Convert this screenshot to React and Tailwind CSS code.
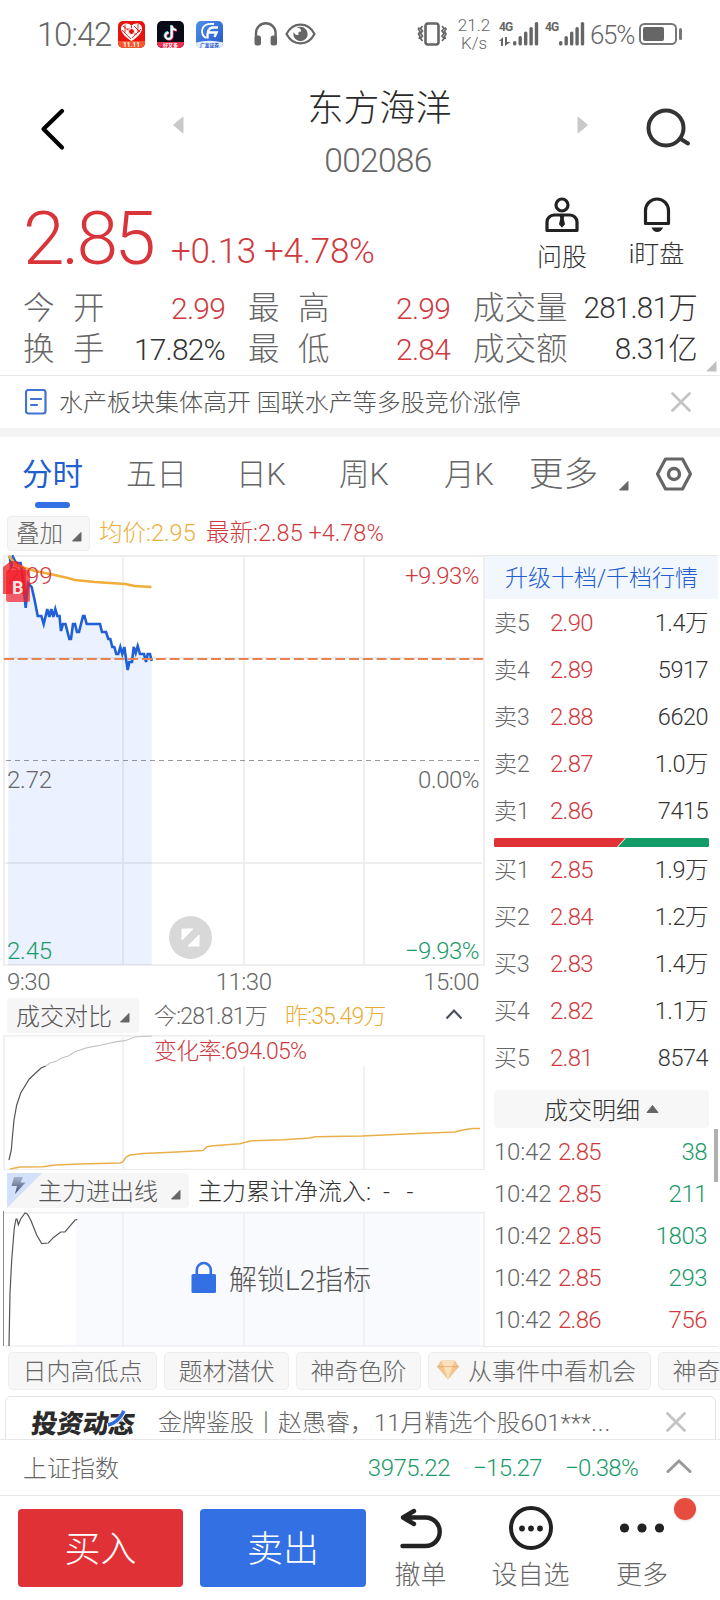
import React from 'react';

const stats = [
  ['今', '开', '2.99', 'text-[#cf3a3f]'],
  ['换', '手', '17.82%', 'text-[#333]'],
];
const stats2 = [
  ['最', '高', '2.99'],
  ['最', '低', '2.84'],
];
const stats3 = [
  ['成交量', '281.81万'],
  ['成交额', '8.31亿'],
];

const asks = [
  ['卖5', '2.90', '1.4万'],
  ['卖4', '2.89', '5917'],
  ['卖3', '2.88', '6620'],
  ['卖2', '2.87', '1.0万'],
  ['卖1', '2.86', '7415'],
];

const bids = [
  ['买1', '2.85', '1.9万'],
  ['买2', '2.84', '1.2万'],
  ['买3', '2.83', '1.4万'],
  ['买4', '2.82', '1.1万'],
  ['买5', '2.81', '8574'],
];

const trades = [
  ['10:42', '2.85', '38', 'text-[#1a9a68]'],
  ['10:42', '2.85', '211', 'text-[#1a9a68]'],
  ['10:42', '2.85', '1803', 'text-[#1a9a68]'],
  ['10:42', '2.85', '293', 'text-[#1a9a68]'],
  ['10:42', '2.86', '756', 'text-[#cf3a3f]'],
];

const PRICE =
  '8.5,557 10,557 11,568 13,557 16,563 20.6,563 23,580 25.7,608 28,583 31.7,587 35,602 37.7,616 41.3,616 43.7,624 47.3,609 49.3,617 51.3,609 53.3,617 55.3,609 57.3,616 59.5,616 61,631 63,624 65.5,624 69.3,639 71,639 73,624 75,624 77,632 79,632 83,616 84.5,616 86.7,624 100,624 102,632 106,632 108.3,639 110.3,639 112.3,647 114.3,647 116.3,654 118.3,654 120.3,647 122.3,654 124.3,647 127.7,670 129.3,662 132,662 133.7,647 135.7,653 137.7,646 140,654 144,654 146,662 147.7,654 150,654 151.7,661';

function Corner({ className }) {
  return (
    <svg className={className} width="10" height="10" viewBox="0 0 10 10">
      <path d="M9 0.5V9H0.5Z" fill="#666" stroke="#666" strokeLinejoin="round" />
    </svg>
  );
}

function Close() {
  return (
    <svg width="20" height="20" viewBox="0 0 20 20" stroke="#c4c4c4" strokeWidth="2.8" strokeLinecap="round">
      <path d="M1.5 1.5L18.5 18.5M18.5 1.5L1.5 18.5" />
    </svg>
  );
}

function Bars() {
  return (
    <svg width="26" height="24" viewBox="0 0 26 24" fill="#666">
      <rect x="0" y="19" width="3.4" height="4.6" rx="1.6" />
      <rect x="5.5" y="14" width="3.4" height="9.6" rx="1.6" />
      <rect x="11" y="9.5" width="3.4" height="14.1" rx="1.6" />
      <rect x="16.4" y="5" width="3.4" height="18.6" rx="1.6" />
      <rect x="21.8" y="0" width="3.4" height="23.6" rx="1.6" />
    </svg>
  );
}

function StatusBar() {
  return (
    <div className="flex h-[68px] items-center pl-[37px] text-[#666]">
      <span className="w-[81px] pt-[2px] text-[33px] tracking-[-1.2px]">10:42</span>
      <svg width="27" height="27" viewBox="0 0 27 27">
        <rect width="27" height="27" rx="5" fill="#e8120f" />
        <path d="M0 20H27V22a5 5 0 0 1-5 5H5a5 5 0 0 1-5-5Z" fill="#f4572c" />
        <path d="M13.5 20C8 16.500 3 12 3 7.500C3 2 10.500 1 13.500 5C16.500 1 24 2 24 7.500C24 12 19 16.500 13.500 20Z" fill="#fff" />
        <path d="M5 5l6 5M7 3.500v8M20 3v9M16 5l6 6M4 9l9 9M23 8l-9 9M13.500 5v4M9 8h3M16 13h3" stroke="#e8120f" strokeWidth="0.9" />
        <circle cx="13.500" cy="10.500" r="3" fill="#e8120f" stroke="#fff" />
        <text x="13.500" y="26" fontSize="6.500" textAnchor="middle" fill="#fff" className="font-bold">11.11</text>
      </svg>
      <svg className="ml-3" width="27" height="27" viewBox="0 0 27 27">
        <rect width="27" height="27" rx="5" fill="#0b0a17" />
        <path d="M0 21H27V22a5 5 0 0 1-5 5H5a5 5 0 0 1-5-5Z" fill="#e8304f" />
        <path d="M14.200 4v10.500a3.200 3.200 0 1 1-3.200-3.200M14.200 4.500c.5 2.500 2.300 4 4.500 4.200" fill="none" stroke="#2bdcd8" strokeWidth="2.400" />
        <path d="M15.400 5v10.300a3.200 3.200 0 1 1-3.200-3.200M15.400 5.300c.5 2.500 2.300 4 4.500 4.200" fill="none" stroke="#f4305a" strokeWidth="2.400" />
        <path d="M14.800 4.500v10.400a3.200 3.200 0 1 1-3.200-3.200M14.800 4.900c.5 2.500 2.300 4 4.500 4.200" fill="none" stroke="#fff" strokeWidth="2" />
        <text x="13.500" y="26" fontSize="5" textAnchor="middle" fill="#fff" className="font-bold">好又多</text>
      </svg>
      <svg className="ml-3" width="27" height="27" viewBox="0 0 27 27">
        <defs>
          <linearGradient id="gf" x1="0" y1="0" x2="1" y2="1">
            <stop offset="0" stopColor="#4f8eea" />
            <stop offset="1" stopColor="#2457c9" />
          </linearGradient>
        </defs>
        <rect width="27" height="27" rx="5" fill="url(#gf)" />
        <path d="M0 21.500Q13.500 18 27 21.500V22a5 5 0 0 1-5 5H5a5 5 0 0 1-5-5Z" fill="#e6effd" />
        <path d="M10 17A7.600 7.600 0 0 1 9.500 4Q13 2.300 18 3" fill="none" stroke="#fff" strokeWidth="1.800" />
        <path d="M11.500 17.500Q11 7.500 16 6.500H22M13 11.500H20.500L18.500 16" fill="none" stroke="#fff" strokeWidth="2.400" />
        <text x="13.500" y="26" fontSize="4.800" textAnchor="middle" fill="#2457c9" className="font-bold">广发证券</text>
      </svg>
      <svg className="ml-[31px]" width="24" height="24" viewBox="0 0 24 24">
        <path d="M2 16V11a9.800 9.800 0 0 1 19.600 0V16" fill="none" stroke="#666" strokeWidth="2.400" />
        <rect x="0.500" y="13.500" width="6.500" height="10" rx="2.500" fill="#666" />
        <rect x="16.600" y="13.500" width="6.500" height="10" rx="2.500" fill="#666" />
      </svg>
      <svg className="ml-[7px]" width="31" height="22" viewBox="0 0 31 22">
        <path d="M1.500 11C8 -1.500 23 -1.500 29.500 11C23 23.500 8 23.500 1.500 11Z" fill="none" stroke="#666" strokeWidth="2.200" />
        <circle cx="15.500" cy="11" r="7.200" fill="#666" />
        <circle cx="12.500" cy="8.300" r="3.600" fill="#fff" />
        <circle cx="15.300" cy="10.500" r="2" fill="#666" />
      </svg>
      <svg className="ml-[101px]" width="32" height="24" viewBox="0 0 32 24" fill="none" stroke="#666">
        <rect x="8.500" y="1.500" width="13" height="21" rx="2.500" strokeWidth="2.600" />
        <path d="M5.500 4l-2 2.500 2 2.500-2 2.500 2 2.500-2 2.500 2 2.500M2.500 5.500l-1 1.500 1.500 2.500-1.500 2.500 1.500 2.500-1 2.500M25 4l2 2.500-2 2.500 2 2.500-2 2.500 2 2.500-2 2.500M28 5.500l1 1.500-1.500 2.500 1.500 2.500-1.500 2.500 1 2.500" strokeWidth="1.700" />
      </svg>
      <div className="ml-[7px] w-[36px] text-center text-[17px] leading-[18.500px]">21.2<br />K/s</div>
      <div className="ml-[7px] flex items-end">
        <div className="flex h-6 w-[14px] flex-col justify-between">
          <span className="text-[12px] leading-[11px] font-bold tracking-[-0.8px]">4G</span>
          <svg width="12" height="9" viewBox="0 0 12 9" fill="#666">
            <path d="M0 4L4 0V9H2V4ZM6 0h2v5h3.500L6 9Z" />
          </svg>
        </div>
        <Bars />
      </div>
      <div className="ml-[6px] flex items-end">
        <div className="flex h-6 w-[14px]">
          <span className="text-[12px] leading-[11px] font-bold tracking-[-0.8px]">4G</span>
        </div>
        <Bars />
      </div>
      <span className="ml-[5px] w-[49px] pt-[2px] text-[26px] tracking-[-1.3px]">65%</span>
      <svg width="44" height="22" viewBox="0 0 44 22">
        <rect x="1" y="1" width="36" height="20" rx="4.500" fill="none" stroke="#777" strokeWidth="2" />
        <rect x="4" y="4" width="21" height="14" rx="2" fill="#666" />
        <rect x="40" y="5" width="3" height="12" rx="1.500" fill="#777" />
      </svg>
    </div>
  );
}

function Header() {
  return (
    <div className="flex h-[117px] items-start">
      <svg className="mt-10 ml-10" width="26" height="43" viewBox="0 0 26 43">
        <path d="M22 3L3.500 21L22 39.500" fill="none" stroke="#000" strokeWidth="4.200" strokeLinecap="round" strokeLinejoin="round" />
      </svg>
      <svg className="mt-12 ml-[106px]" width="12" height="18" viewBox="0 0 12 18">
        <path d="M11 1V17L1.500 9Z" fill="#c9c9c9" stroke="#c9c9c9" strokeLinejoin="round" />
      </svg>
      <div className="w-[393px] pt-[19px] pr-[2px] text-center">
        <div className="text-[36px] leading-[44px] text-[#2a2a2a]">东方海洋</div>
        <div className="mt-[12px] pr-[3px] text-[33.500px] leading-9 tracking-[-0.700px] text-[#666]">002086</div>
      </div>
      <svg className="mt-12" width="12" height="18" viewBox="0 0 12 18">
        <path d="M1 1V17L10.500 9Z" fill="#c9c9c9" stroke="#c9c9c9" strokeLinejoin="round" />
      </svg>
      <svg className="mt-[39px] ml-[57px]" width="46" height="42" viewBox="0 0 46 42" fill="none" stroke="#333" strokeWidth="4">
        <circle cx="20" cy="21" r="17.500" />
        <path d="M34 31.500L42 36.500" strokeLinecap="round" />
      </svg>
    </div>
  );
}

function PriceRow() {
  return (
    <div className="flex h-[98px] text-[#d8343a]">
      <div className="flex w-[146px] pl-[23px] text-[75px] leading-[107px] font-[350]">
        <span className="tracking-[-3px]">2.</span>
        <span className="tracking-[-4px]">85</span>
      </div>
      <div className="w-[368px] pt-[49px] pl-[25px] text-[35px] leading-9 tracking-[-0.300px] whitespace-nowrap text-[#cf3a3f]">+0.13 +4.78%</div>
      <div className="flex w-[96px] flex-col items-center pt-3 text-[#333]">
        <svg width="34" height="36" viewBox="0 0 34 36" fill="none" stroke="#222" strokeWidth="3.200">
          <circle cx="17" cy="8" r="6" />
          <path d="M2 33.500V25a7 7 0 0 1 7-7H25a7 7 0 0 1 7 7V33.500Z" strokeLinejoin="round" />
          <path d="M15.500 18h3l-.5 4 1.200 5-2.200 2.500-2.200-2.500 1.200-5Z" fill="#222" strokeWidth="1.500" />
        </svg>
        <div className="mt-[9px] text-[25px] leading-8">问股</div>
      </div>
      <div className="flex w-[93px] flex-col items-center pt-3 text-[#333]">
        <svg width="28" height="36" viewBox="0 0 28 36">
          <path d="M2.500 26.500V13.500a11.500 11.500 0 0 1 23 0V26.500Z" fill="none" stroke="#222" strokeWidth="3.200" strokeLinejoin="round" />
          <path d="M8.500 30.500H20Q18 35 14.200 35Q10.500 35 8.500 30.500Z" fill="#222" />
        </svg>
        <div className="mt-[6px] text-[25px] leading-8">i盯盘</div>
      </div>
    </div>
  );
}

function Stats() {
  return (
    <div className="flex h-[93px] border-b border-[#e8e8e8] pt-[5px] pl-[23px] text-[31.500px] leading-[41px] text-[#666]">
      <div className="w-[203px]">
        {stats.map(([a, b, v, color]) => (
          <div key={a} className="flex">
            <span className="w-[50px]">{a}</span>
            <span>{b}</span>
            <span className={`mr-[1px] ml-auto text-[30px] tracking-[-0.800px] ${color}`}>{v}</span>
          </div>
        ))}
      </div>
      <div className="ml-[22px] w-[203px]">
        {stats2.map(([a, b, v]) => (
          <div key={b} className="flex">
            <span className="w-[50px]">{a}</span>
            <span>{b}</span>
            <span className="mr-[1px] ml-auto text-[30px] tracking-[-0.800px] text-[#cf3a3f]">{v}</span>
          </div>
        ))}
      </div>
      <div className="ml-[22px] w-[224px]">
        {stats3.map(([a, v]) => (
          <div key={a} className="flex">
            <span>{a}</span>
            <span className="ml-auto text-[29.500px] tracking-[-0.700px] whitespace-nowrap text-[#333]">{v}</span>
          </div>
        ))}
      </div>
      <svg className="mt-[73px] ml-[9px]" width="11" height="11" viewBox="0 0 11 11">
        <path d="M10.500 0V10.500H0Z" fill="#bfbfbf" />
      </svg>
    </div>
  );
}

function NewsBar() {
  return (
    <div className="flex h-[61px] items-center border-b-[9px] border-[#f4f4f4] pr-[29px] pl-[25px]">
      <svg width="22" height="26" viewBox="0 0 22 26" fill="none" stroke="#3f74d1" strokeWidth="2.200">
        <rect x="1" y="1" width="19.500" height="23.500" rx="2.500" />
        <path d="M6 10H16M6 16H12" strokeLinecap="round" />
      </svg>
      <span className="mr-auto ml-[12px] pt-[2px] text-[24px] text-[#555]">水产板块集体高开 国联水产等多股竞价涨停</span>
      <Close />
    </div>
  );
}

function Tabs() {
  return (
    <div className="flex h-[75px] pl-[22px] text-[30.500px] leading-[75px] text-[#666]">
      <div className="w-[104px] font-[380] text-[#1f5fd0]">
        <div className="h-[65px]">分时</div>
        <div className="ml-[13px] h-[6px] w-[35px] rounded-full bg-[#3270e4]" />
      </div>
      <div className="w-[110px]">五日</div>
      <div className="w-[103px]">日K</div>
      <div className="w-[105px]">周K</div>
      <div className="w-[85px]">月K</div>
      <div className="w-[69px] text-[34.500px]">更多</div>
      <Corner className="mt-[44px] ml-[21px]" />
      <svg className="mt-[20px] ml-[26px]" width="38" height="34" viewBox="0 0 38 34" fill="none" stroke="#666">
        <path d="M10.500 2H27.500L35.500 17L27.500 32H10.500L2.500 17Z" strokeWidth="3.200" strokeLinejoin="round" />
        <circle cx="19" cy="17" r="5.500" strokeWidth="3.400" />
      </svg>
    </div>
  );
}

function PriceChart() {
  return (
    <svg className="block" width="485" height="411" viewBox="0 555 485 411">
      <g stroke="#eeeeee" strokeWidth="1.800">
        <path d="M4 556H485M4 965H485M4 556V966M123 556V965M244 556V965M364 556V965M484 556V965M4 658H482M4 863H482" fill="none" />
      </g>
      <path d="M6 760.500H482" stroke="#999" strokeWidth="1" strokeDasharray="5 4" />
      <polygon points={`8,965 ${PRICE} 151.700,965`} fill="#3b78ff" fillOpacity="0.100" />
      <polyline points={PRICE} fill="none" stroke="#1f5fd8" strokeWidth="2.600" />
      <path d="M9 556L16 565L25 568L35 571L50 574L68 578L75 580L95 582L125 584L135 586L151.500 587" fill="none" stroke="#f0ae38" strokeWidth="2.600" />
      <path d="M4 659H484" stroke="#e8834f" strokeWidth="2" strokeDasharray="10 3.800" />
      <g fontSize="24" letterSpacing="-0.500">
        <text x="7" y="584" fill="#cf3a3f" letterSpacing="0">2.99</text>
        <text x="479" y="584" textAnchor="end" fill="#cf3a3f">+9.93%</text>
        <text x="7" y="788" fill="#666" letterSpacing="-0.200">2.72</text>
        <text x="479" y="788" textAnchor="end" fill="#666">0.00%</text>
        <text x="7" y="959" fill="#1a9a68" letterSpacing="-0.200">2.45</text>
        <text x="479" y="959" textAnchor="end" fill="#1a9a68">−9.93%</text>
      </g>
      <path d="M3 567L11 561H17L26 569V594H3Z" fill="#f21d26" fillOpacity="0.750" />
      <rect x="6" y="570" width="24" height="32" rx="2" fill="#f21d26" fillOpacity="0.700" />
      <text x="12" y="594" fontSize="18" fill="#fff" fillOpacity="0.900" className="font-bold">B</text>
      <circle cx="190.500" cy="937.500" r="21.500" fill="#d8d8d8" />
      <path d="M182 929H193L182 940ZM199 946H188L199 935Z" fill="#fff" stroke="#fff" strokeLinejoin="round" />
    </svg>
  );
}

function CompareChart() {
  return (
    <svg className="block" width="485" height="136" viewBox="0 1034 485 136">
      <path d="M4 1035.800H485M4 1169.500H485M4 1035V1170M123 1035V1170M244 1035V1170M364 1035V1170M484 1035V1170" stroke="#eeeeee" strokeWidth="1.500" />
      <rect x="153" y="1037" width="326" height="29" fill="#fff" />
      <path d="M9 1160L11.300 1150L12.300 1138L14 1120L16.700 1105L20.700 1093L29.300 1079L41 1068L45.700 1066" fill="none" stroke="#555" strokeWidth="1.200" />
      <path d="M45.700 1066L50 1063L56.700 1061L61.700 1058L68.300 1056L75 1051.700L87.300 1047.700L101.700 1045L116.700 1041.700L125 1040.700L135 1037L151.700 1036" fill="none" stroke="#c4c4c4" strokeWidth="1.200" />
      <path d="M10 1169L20 1167L43 1166.700L55 1165L88 1163.700L120 1163L122.700 1162L126 1157L130 1155L143 1153.500L177 1152L203 1150.500L207 1146.700L213 1145.700L240 1143.700L250 1141L283 1139.700L310 1138L315 1136.700L362 1136L395 1134.500L430 1133L455 1132L463 1130L472 1128.500L480 1128.500" fill="none" stroke="#e9b04a" strokeWidth="1.500" />
      <text x="154" y="1059" fontSize="23" letterSpacing="-0.700" fill="#cf3a3f">变化率:694.05%</text>
    </svg>
  );
}

function FlowChart() {
  return (
    <svg className="block" width="485" height="136" viewBox="0 1211 485 136">
      <rect x="76" y="1211" width="404" height="134" fill="#f8fafe" />
      <path d="M4 1212.800H485M4 1346H485M123 1212V1346M244 1212V1346M364 1212V1346M484 1211V1347" stroke="#eeeff3" strokeWidth="1.600" />
      <path d="M3.500 1211V1346" stroke="#888" strokeWidth="1" />
      <path d="M9 1346L10 1293L11.700 1260L14.300 1228L16 1219L17 1219L18.300 1224.700L20.700 1219L25 1213L27.300 1214L30.700 1220L36.700 1235L41.700 1243.500L48.300 1243L53.300 1237.700L60.700 1232L65 1232L75 1220L77.300 1219.700" fill="none" stroke="#555" strokeWidth="1.200" />
      <rect x="191.500" y="1274" width="24.500" height="19" rx="1.500" fill="#3270e4" />
      <path d="M196.800 1275V1270a7 7 0 0 1 14 0V1275" fill="none" stroke="#3270e4" strokeWidth="2.600" />
      <text x="229" y="1289.500" fontSize="28" fill="#555">解锁L2指标</text>
    </svg>
  );
}

function BookRow({ row }) {
  return (
    <div className="flex h-[47px] items-center pr-[10px] pl-[9px] text-[23px] text-[#666]">
      <span className="w-[56px] pt-[1px]">{row[0]}</span>
      <span className="pb-[1px] text-[24px] tracking-[-0.700px] text-[#cf3a3f]">{row[1]}</span>
      <span className="ml-auto text-[23.500px] tracking-[-0.500px] text-[#333]">{row[2]}</span>
    </div>
  );
}

function OrderBook() {
  return (
    <div className="relative w-[233px] border-y border-[#e8e8e8]">
      <div className="mb-[1px] h-[43px] bg-[#f2f6fd] text-center text-[23px] leading-[45px] text-[#1f5fd0]">升级十档/千档行情</div>
      {asks.map((row) => (
        <BookRow key={row[0]} row={row} />
      ))}
      <svg className="mt-[3px] ml-[9px] block" width="215" height="9" viewBox="0 0 215 9">
        <path d="M1.500 0H131L123 9H1.500Q0 9 0 7.500V1.500Q0 0 1.500 0Z" fill="#e03136" />
        <path d="M132 0H213.500Q215 0 215 1.500V7.500Q215 9 213.500 9H124Z" fill="#149c68" />
      </svg>
      {bids.map((row) => (
        <BookRow key={row[0]} row={row} />
      ))}
      <div className="mx-[9px] mt-[8px] mb-[3px] flex h-[38px] items-center justify-center gap-[6px] rounded bg-[#f7f7f7] text-[24px] text-[#333]">
        <span className="pt-[3px]">成交明细</span>
        <svg width="13" height="8" viewBox="0 0 13 8">
          <path d="M6.500 0.500L12 7.500H1Z" fill="#666" stroke="#666" strokeLinejoin="round" />
        </svg>
      </div>
      {trades.map(([time, price, vol, color], i) => (
        <div key={i} className="flex h-[42px] items-center pr-[11px] pl-[9px] text-[24px] tracking-[-0.500px] text-[#666]">
          <span className="w-[64px] tracking-[-0.200px]">{time}</span>
          <span className="tracking-[-0.700px] text-[#cf3a3f]">{price}</span>
          <span className={`ml-auto ${color}`}>{vol}</span>
        </div>
      ))}
      <div className="absolute top-[573px] right-0 h-[53px] w-1 bg-[#b0b0b0]" />
    </div>
  );
}

function Body() {
  return (
    <div className="flex h-[792px]">
      <div className="w-[485px]">
        <PriceChart />
        <div className="flex h-[31px] items-center justify-between pr-[6px] pl-[7px] text-[24px] tracking-[-0.500px] text-[#666]">
          <span>9:30</span>
          <span className="ml-[14px]">11:30</span>
          <span>15:00</span>
        </div>
        <div className="flex h-[37px] items-center pl-[7px] text-[23px]">
          <div className="flex h-[35px] w-[132px] items-center rounded-sm bg-[#f6f6f6] pl-[9px] text-[24px] text-[#555]">
            <span className="pt-[2px]">成交对比</span>
            <Corner className="mt-1 ml-[8px]" />
          </div>
          <span className="ml-[15px] w-[131px] pt-[3px] tracking-[-0.800px] text-[#666]">今:281.81万</span>
          <span className="w-[160px] pt-[3px] tracking-[-0.850px] text-[#e9ac38]">昨:35.49万</span>
          <svg className="-mt-1" width="18" height="12" viewBox="0 0 18 12">
            <path d="M1.500 10.500L9 2.500L16.500 10.500" fill="none" stroke="#4b5163" strokeWidth="2.200" />
          </svg>
        </div>
        <CompareChart />
        <div className="flex h-[41px] items-center pl-[7px] text-[#555]">
          <div className="flex h-[35px] w-[182px] items-center rounded bg-[#f6f6f6] text-[24px]">
            <svg width="35" height="35" viewBox="0 0 35 35">
              <defs>
                <linearGradient id="bolt" x1="0" y1="0" x2="0" y2="1">
                  <stop offset="0" stopColor="#aab4cf" />
                  <stop offset="1" stopColor="#3f4c70" />
                </linearGradient>
              </defs>
              <path d="M0 0H35L0 35Z" fill="#d3e0fa" />
              <path d="M7 4H16L13.500 9.500H18.500L8 21L10 13H4.500Z" fill="url(#bolt)" />
            </svg>
            <span className="ml-[-4px] pt-[3px]">主力进出线</span>
            <Corner className="mt-2 ml-[13px]" />
          </div>
          <span className="ml-[9px] pt-[2px] text-[24px] text-[#333]">
            主力累计净流入: <span className="ml-[6px] tracking-[5.500px]">- -</span>
          </span>
        </div>
        <FlowChart />
      </div>
      <OrderBook />
    </div>
  );
}

function Chips() {
  const chip = 'flex h-[38px] shrink-0 items-center rounded-[5px] border border-[#ededed] bg-[#f7f7f7] pt-[2px]';
  return (
    <div className="flex h-[49px] gap-[7px] overflow-hidden pt-[5px] pl-2 text-[24px] text-[#666]">
      <div className={`${chip} w-[149px] justify-center`}>日内高低点</div>
      <div className={`${chip} w-[125px] justify-center`}>题材潜伏</div>
      <div className={`${chip} w-[125px] justify-center`}>神奇色阶</div>
      <div className={`${chip} w-[223px] gap-[9px] pl-[8px]`}>
        <svg className="-mt-[5px]" width="22" height="20" viewBox="0 0 23 20">
          <path d="M4.500 0H18.500L23 6.500L11.500 20L0 6.500Z" fill="#f2c48f" />
          <path d="M4.500 0L7 6.500H16L18.500 0ZM7 6.500L11.500 20L16 6.500Z" fill="#fae0bc" />
          <path d="M0 6.500H23" stroke="#e5ab70" strokeWidth="0.800" />
        </svg>
        从事件中看机会
      </div>
      <div className={`${chip} w-[149px] justify-center`}>神奇色阶线</div>
    </div>
  );
}

function Promo() {
  return (
    <div className="h-[43px] overflow-hidden px-[5px]">
      <div className="flex h-[52px] w-[711px] items-center rounded-t-md border border-[#e4e4e4] pl-[23px]">
        <svg width="108" height="30" viewBox="0 0 108 30">
          <text x="2" y="26" fontSize="26" fill="#2b2b2b" transform="skewX(-8) translate(3 0)" textLength="103" className="font-black">投资动态</text>
          <path d="M78 19Q89 17 96 3" fill="none" stroke="#fff" strokeWidth="5" />
          <path d="M79 18Q89 16 95 4" fill="none" stroke="#2f6be0" strokeWidth="3.500" />
        </svg>
        <span className="ml-[21px] pt-[2px] text-[24px] whitespace-nowrap text-[#666]">金牌鉴股丨赵愚睿，11月精选个股601***<span className="tracking-[1px]">...</span></span>
        <div className="mr-[29px] ml-auto">
          <Close />
        </div>
      </div>
    </div>
  );
}

function IndexBar() {
  return (
    <div className="flex h-[56px] items-center border-t border-[#e8e8e8] pr-[28px] pl-[23px] text-[24px] text-[#1a9a68]">
      <span className="mr-auto pt-[2px] text-[#666]">上证指数</span>
      <span className="pt-[1px] tracking-[-0.500px]">3975.22</span>
      <span className="ml-[23px] pt-[1px] tracking-[-0.600px]">−15.27</span>
      <span className="ml-[23px] pt-[1px] tracking-[-0.700px]">−0.38%</span>
      <svg className="-mt-1 ml-[28px]" width="26" height="16" viewBox="0 0 26 16">
        <path d="M2 13.500L13 3L24 13.500" fill="none" stroke="#999" strokeWidth="3" strokeLinecap="round" />
      </svg>
    </div>
  );
}

function Footer() {
  return (
    <div className="flex h-[105px] border-t border-[#e8e8e8] text-[26px] leading-8 text-[#666]">
      <button className="mt-[13px] ml-[18px] h-[78px] w-[165px] rounded bg-[#df3136] pt-[3px] text-[36px] text-white">买入</button>
      <button className="mt-[13px] ml-[17px] h-[78px] w-[166px] rounded bg-[#3270e4] pt-[3px] text-[36px] text-white">卖出</button>
      <div className="flex w-[109px] flex-col items-center pt-[12px]">
        <svg width="42" height="42" viewBox="0 0 42 42" fill="none" stroke="#222" strokeWidth="4.400" strokeLinecap="round" strokeLinejoin="round">
          <path d="M14 3L3 9.500L14 16M3 9.500H25.500a14 14 0 0 1 0 28.500H2.500" />
        </svg>
        <div className="mt-[9px]">撤单</div>
      </div>
      <div className="flex w-[111px] flex-col items-center pt-[10px]">
        <svg width="44" height="44" viewBox="0 0 44 44">
          <circle cx="22" cy="22" r="20" fill="none" stroke="#222" strokeWidth="4" />
          <circle cx="13" cy="22.500" r="2.900" fill="#222" />
          <circle cx="22" cy="22.500" r="2.900" fill="#222" />
          <circle cx="31" cy="22.500" r="2.900" fill="#222" />
        </svg>
        <div className="mt-[9px]">设自选</div>
      </div>
      <div className="relative flex w-[112px] flex-col items-center pt-[10px]">
        <svg width="46" height="44" viewBox="0 0 46 44" fill="#222">
          <circle cx="5.500" cy="22" r="4.600" />
          <circle cx="23" cy="22" r="4.600" />
          <circle cx="40.500" cy="22" r="4.600" />
        </svg>
        <div className="mt-[9px]">更多</div>
        <div className="absolute top-[2px] right-[2px] size-[22px] rounded-full bg-[#e64d3f] shadow-sm" />
      </div>
    </div>
  );
}

export default function App() {
  return (
    <div className="h-[1600px] w-[720px] overflow-hidden bg-white font-['Roboto','Noto_Sans_CJK_SC',sans-serif] font-light">
      <StatusBar />
      <Header />
      <PriceRow />
      <Stats />
      <NewsBar />
      <Tabs />
      <div className="flex h-[43px] items-center pl-[7px] text-[23.500px]">
        <div className="flex h-[35px] w-[83px] items-center rounded border border-[#ededed] bg-[#f7f7f7] pt-[2px] pl-[8px] text-[#666]">
          叠加
          <Corner className="mt-1 ml-[9px]" />
        </div>
        <span className="ml-[9px] w-[107px] text-[#ecae3c]">均价:2.95</span>
        <span className="text-[#cf3a3f]">最新:2.85 +4.78%</span>
      </div>
      <Body />
      <Chips />
      <Promo />
      <IndexBar />
      <Footer />
    </div>
  );
}
